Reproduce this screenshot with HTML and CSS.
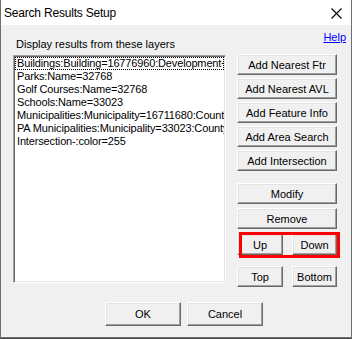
FILE: index.html
```html
<!DOCTYPE html>
<html lang="en">
<head>
    <meta charset="UTF-8">
    <title>Search Results Setup</title>
    <link rel="stylesheet" href="styles.css">
</head>
<body>
    <div class="window">
        <div class="titlebar">
            <span class="title">Search Results Setup</span>
            <svg class="close" width="11" height="11" viewBox="0 0 11 11">
                <path d="M0.5 0.5 L10.5 10.5 M10.5 0.5 L0.5 10.5" stroke="#000" stroke-width="1.1" fill="none"/>
            </svg>
        </div>

        <div class="content">
            <div class="layers">
                <div class="label">Display results from these layers</div>
                <div class="listbox">
                    <div class="item focused">Buildings:Building=16776960:Development+</div>
                    <div class="item">Parks:Name=32768</div>
                    <div class="item">Golf Courses:Name=32768</div>
                    <div class="item">Schools:Name=33023</div>
                    <div class="item">Municipalities:Municipality=16711680:County</div>
                    <div class="item">PA Municipalities:Municipality=33023:County</div>
                    <div class="item">Intersection-:color=255</div>
                </div>
            </div>

            <div class="actions">
                <a class="help" href="#">Help</a>
                <div class="stack add-group">
                    <button class="btn">Add Nearest Ftr</button>
                    <button class="btn">Add Nearest AVL</button>
                    <button class="btn">Add Feature Info</button>
                    <button class="btn">Add Area Search</button>
                    <button class="btn">Add Intersection</button>
                </div>
                <div class="stack edit-group">
                    <button class="btn">Modify</button>
                    <button class="btn">Remove</button>
                </div>
                <div class="pair order-pair">
                    <button class="btn btn-up">Up</button>
                    <button class="btn btn-down">Down</button>
                    <span class="highlight"></span>
                </div>
                <div class="pair end-pair">
                    <button class="btn btn-up">Top</button>
                    <button class="btn btn-down">Bottom</button>
                </div>
            </div>
        </div>

        <div class="footer">
            <button class="btn btn-dialog">OK</button>
            <button class="btn btn-dialog">Cancel</button>
        </div>
    </div>
</body>
</html>
```

FILE: styles.css
```css
body {
    margin: 0;
    background-color: #4a4a4a;
    font-family: "Liberation Sans", Arial, sans-serif;
    font-size: 11px;
    color: #000;
}
.window {
    width: 352px;
    height: 338px;
    box-sizing: border-box;
    background-color: #f0f0f0;
    border: 1px solid #6e6e6e;
    border-top: none;
    display: flex;
    flex-direction: column;
}
.titlebar {
    height: 25px;
    flex-shrink: 0;
    background-color: #fff;
    display: flex;
    align-items: center;
    justify-content: space-between;
    padding: 0 9px 0 3px;
}
.title {
    font-size: 12px;
    letter-spacing: -0.2px;
    padding-top: 1px;
}
.close {
    margin-top: 2px;
}
.content {
    display: flex;
    padding-left: 12px;
}
.layers {
    width: 213px;
    padding-top: 13px;
}
.label {
    padding-left: 3px;
    line-height: 13px;
    height: 13px;
    margin-bottom: 4px;
}
.listbox {
    height: 228px;
    box-sizing: border-box;
    background-color: #fff;
    border: 1px solid;
    border-color: #a0a0a0 #fff #fff #a0a0a0;
    box-shadow: inset 1px 1px #696969, inset -1px -1px #e3e3e3;
    padding: 1px;
}
.item {
    line-height: 13px;
    padding-left: 2px;
    letter-spacing: -0.15px;
    white-space: nowrap;
    overflow: hidden;
}
.item.focused {
    outline: 1px dotted #000;
    outline-offset: -1px;
}
.actions {
    margin-left: 11px;
    width: 109px;
    padding-top: 6px;
    display: flex;
    flex-direction: column;
}
.help {
    align-self: flex-end;
    line-height: 13px;
    color: #0000ff;
    text-decoration: underline;
    margin-bottom: 10px;
}
.btn {
    width: 100px;
    height: 21px;
    box-sizing: border-box;
    padding: 0;
    background-color: #f0f0f0;
    border: 1px solid;
    border-color: #fff #696969 #696969 #fff;
    box-shadow: inset -1px -1px #a0a0a0, inset 1px 1px #e3e3e3;
    font-family: inherit;
    font-size: 11px;
    color: #000;
}
.stack {
    display: flex;
    flex-direction: column;
}
.add-group {
    gap: 3px;
}
.edit-group {
    gap: 4px;
    margin-top: 12px;
}
.pair {
    width: 100px;
    display: flex;
    justify-content: space-between;
}
.order-pair {
    position: relative;
    margin-top: 5px;
}
.end-pair {
    margin-top: 11px;
}
.btn-up {
    width: 46px;
}
.btn-down {
    width: 45px;
}
.highlight {
    position: absolute;
    left: 2px;
    top: -2px;
    width: 101px;
    height: 26px;
    box-sizing: border-box;
    border: 3px solid #ff0000;
}
.footer {
    display: flex;
    gap: 6px;
    padding-left: 104px;
    margin-top: 15px;
}
.btn-dialog {
    width: 76px;
    height: 24px;
}
```
